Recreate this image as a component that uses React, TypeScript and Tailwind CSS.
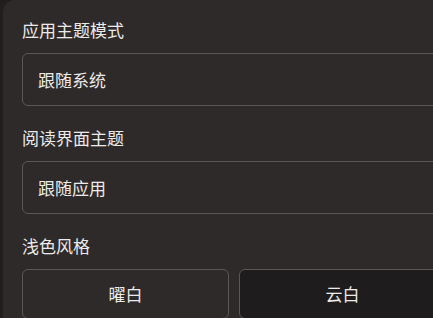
import React from "react";

export default function App() {
  return (
    <div
      className="w-[433px] h-[318px] overflow-hidden bg-[#221e1d]"
      style={{ fontFamily: '"Noto Sans CJK SC", "Noto Sans", sans-serif' }}
    >
      <div className="ml-[3px] w-[460px] h-[340px] rounded-tl-[12px] bg-[#2e2a29] pl-[19px] pt-[18px] text-[#eceaea]">
        <div className="w-[424px] flex flex-col gap-[20px]">
          <div className="flex flex-col">
            <div className="text-[17px] leading-[24px] mb-[11px]">应用主题模式</div>
            <div className="h-[53px] rounded-[6px] border border-[#5b5757] bg-[#2e2a29] flex items-center px-[15px] text-[17px] w-[440px]">
              跟随系统
            </div>
          </div>
          <div className="flex flex-col">
            <div className="text-[17px] leading-[24px] mb-[11px]">阅读界面主题</div>
            <div className="h-[53px] rounded-[6px] border border-[#5b5757] bg-[#2e2a29] flex items-center px-[15px] text-[17px] w-[440px]">
              跟随应用
            </div>
          </div>
          <div className="flex flex-col">
            <div className="text-[17px] leading-[24px] mb-[11px]">浅色风格</div>
            <div className="grid grid-cols-2 gap-[10px]">
              <div className="h-[50px] rounded-[6px] border border-[#5b5757] bg-[#2e2a29] flex items-center justify-center text-[17px]">
                曜白
              </div>
              <div className="h-[50px] rounded-[6px] border border-[#5b5757] bg-[#1e1c1c] flex items-center justify-center text-[17px]">
                云白
              </div>
            </div>
          </div>
        </div>
      </div>
    </div>
  );
}
